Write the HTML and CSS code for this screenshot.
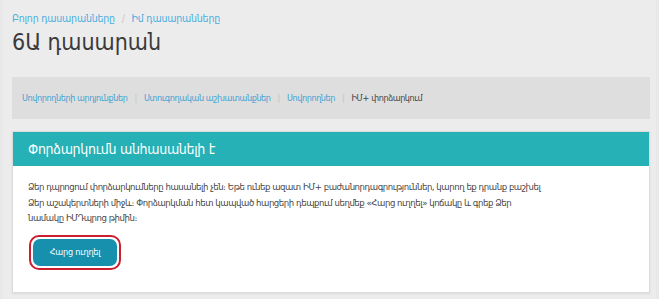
FILE: index.html
```html
<!DOCTYPE html>
<html lang="hy">
<head>
    <meta charset="UTF-8">
    <meta name="viewport" content="width=device-width, initial-scale=1.0">
    <title>6Ա դասարան</title>
    <link rel="stylesheet" href="styles.css">
</head>
<body>
    <div class="page">
        <div class="crumbs">
            <a href="#">Բոլոր դասարանները</a>
            <span class="sep">/</span>
            <a href="#">Իմ դասարանները</a>
        </div>
        <h1>6Ա դասարան</h1>

        <div class="tabs">
            <a href="#">Սովորողների արդյունքներ</a>
            <span class="bar">|</span>
            <a href="#">Ստուգողական աշխատանքներ</a>
            <span class="bar">|</span>
            <a href="#">Սովորողներ</a>
            <span class="bar">|</span>
            <span class="current">ԻՄ+ փորձարկում</span>
        </div>

        <div class="panel">
            <div class="panel-head">Փորձարկումն անհասանելի է</div>
            <div class="panel-body">
                <p>Ձեր դպրոցում փորձարկումները հասանելի չեն։ Եթե ունեք ազատ ԻՄ+ բաժանորդագրություններ, կարող եք դրանք բաշխել Ձեր աշակերտների միջև։ Փորձարկման հետ կապված հարցերի դեպքում սեղմեք «Հարց ուղղել» կոճակը և գրեք Ձեր նամակը ԻՄԴպրոց թիմին։</p>
                <div class="ring">
                    <button type="button">Հարց ուղղել</button>
                </div>
            </div>
        </div>
    </div>
</body>
</html>
```

FILE: styles.css
```css
body {
    margin: 0;
    background-color: #e8e8e8;
    font-family: "DejaVu Sans Condensed", "DejaVu Sans", sans-serif;
    font-stretch: condensed;
    color: #333;
}
a {
    color: #3ea2d3;
    text-decoration: none;
}
.page {
    margin: 0 3px;
    min-height: 299px;
    background-color: #ececec;
    padding: 9px 6px 0 9px;
    box-sizing: border-box;
}
.crumbs {
    font-size: 10.5px;
    letter-spacing: -0.2px;
    height: 18px;
    line-height: 18px;
}
.crumbs a {
    color: #4aade0;
}
.crumbs .sep {
    color: #c8c8c8;
    margin: 0 4px;
}
h1 {
    margin: 0;
    font-size: 23px;
    font-weight: normal;
    line-height: 31px;
    color: #3a3a3a;
}
.tabs {
    margin-top: 19px;
    background-color: #dedede;
    height: 42px;
    display: flex;
    align-items: center;
    padding: 0 10px;
    font-size: 9px;
    letter-spacing: -0.4px;
}
.tabs .bar {
    color: #c4c4c4;
    margin: 0 7px;
}
.tabs .current {
    color: #444;
}
.panel {
    margin-top: 12px;
    background-color: #fff;
    border: 1px solid #dcdcdc;
    box-shadow: 0 1px 2px rgba(0,0,0,0.08);
}
.panel-head {
    background-color: #25b1b5;
    color: #fff;
    font-size: 14px;
    letter-spacing: -0.3px;
    height: 34px;
    line-height: 34px;
    padding: 0 15px;
}
.panel-body {
    padding: 13px 15px 22px;
}
.panel-body p {
    margin: 0 0 9px;
    max-width: 515px;
    font-size: 9.5px;
    letter-spacing: -0.45px;
    line-height: 15.5px;
    color: #444;
}
.ring {
    display: inline-block;
    border: 2px solid #c91f30;
    border-radius: 10px;
    padding: 2px;
    margin-left: 1px;
}
.ring button {
    display: block;
    width: 84px;
    height: 27px;
    border: none;
    border-radius: 7px;
    background-color: #1790ae;
    color: #fff;
    font-family: inherit;
    font-stretch: condensed;
    font-size: 9px;
    letter-spacing: -0.2px;
    cursor: pointer;
}
```
